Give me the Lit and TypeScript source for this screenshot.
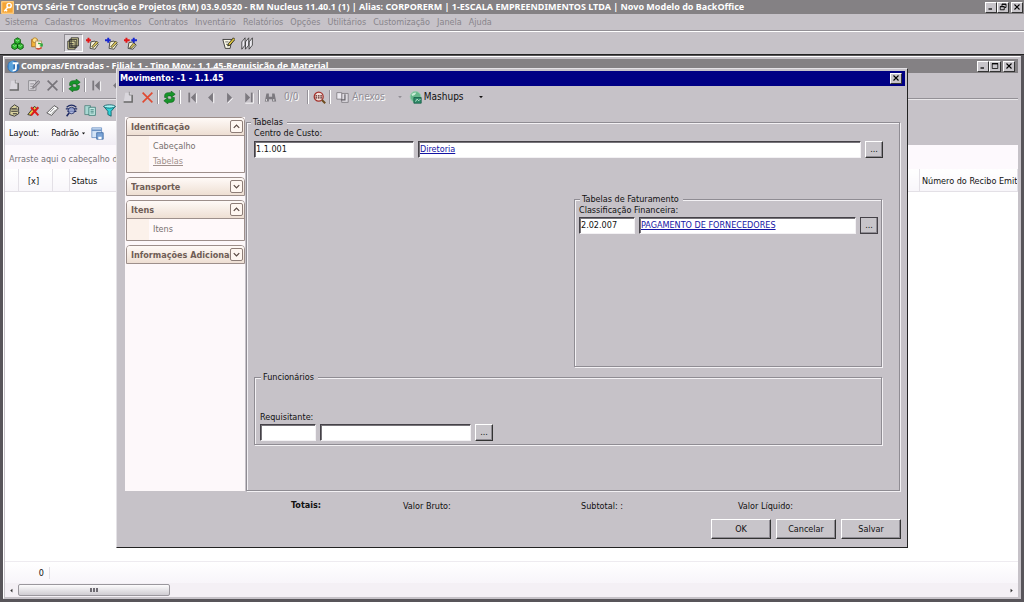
import { LitElement, html, css, svg, nothing, TemplateResult } from "lit";
import { customElement, property, state } from "lit/decorators.js";
import { classMap } from "lit/directives/class-map.js";

const glyphs: Record<string, TemplateResult> = {
  key: svg`<rect width="16" height="16" rx="1" fill="#f6a534"/><rect x="1" y="1" width="14" height="14" fill="none" stroke="#fde3b5"/><circle cx="10" cy="5.5" r="2.6" fill="none" stroke="#fff" stroke-width="1.8"/><path d="M8.5 7.5 4 12.5M5.5 10.5l2 2" stroke="#fff" stroke-width="1.8" fill="none"/>`,
  sphere: svg`<circle cx="8" cy="8" r="7.5" fill="#2f6fb5"/><path d="M2 5a7 7 0 0 1 6-4v14a7 7 0 0 1-6-4z" fill="#5ba3dc"/><path d="M7 4h7M11 4v6q0 3-4 3" stroke="#fff" stroke-width="2.2" fill="none"/>`,
  cubes: svg`<g stroke="#064d06" stroke-width="1" fill="#2fb52f"><path d="m8 1 3.5 2v4L8 9 4.500 7V3z"/><path d="m4.500 7.500 3.500 2v4l-3.500 2-3.500-2v-4zM11.500 7.500l3.500 2v4l-3.500 2-3.500-2v-4z"/></g><path d="m5.500 3.500 2.500 1.500 2.500-1.500M2 10l2.500 1.500L7 10M9 10l2.500 1.500L14 10" stroke="#9bf09b" fill="none"/>`,
  users: svg`<path d="M2 3h7v9H2z" fill="#f2b43a" stroke="#a56a1c"/><circle cx="6" cy="4" r="3" fill="#ffe38a" stroke="#b27a22"/><rect x="7" y="5" width="7" height="9" fill="#fff6da" stroke="#a98e63"/><path d="M10 8a4 4 0 0 1 5 3M15 8v3h-3" stroke="#2da83a" stroke-width="1.600" fill="none"/><path d="M8 14q3 2 6-1" stroke="#d6402c" stroke-width="1.600" fill="none"/>`,
  files: svg`<path d="M5 1h9v10h-9zM3 3h9v10H3zM1 5h9v10H1z" fill="#d8d39a" stroke="#222"/><path d="M3 8h5M3 10h5M3 12h5" stroke="#333"/>`,
  flowR: svg`<path d="m6 6 5-1 4 4-4 6-6-1z" fill="#f6f1d4" stroke="#333"/><path d="m7 12 6-7 2 2-6 6z" fill="#d8c35a" stroke="#222" stroke-width=".8"/><path d="M0 4h6M3 1v6" stroke="#e01818" stroke-width="2.400"/>`,
  flowB: svg`<path d="m6 6 5-1 4 4-4 6-6-1z" fill="#f6f1d4" stroke="#333"/><path d="m7 12 6-7 2 2-6 6z" fill="#d8c35a" stroke="#222" stroke-width=".8"/><path d="M0 4h7M4 1v6" stroke="#1726d0" stroke-width="2.400"/>`,
  flowRB: svg`<path d="m6 7 5-1 4 4-4 5-6-1z" fill="#f6f1d4" stroke="#333"/><path d="m7 13 5-6 2 2-5 5z" fill="#d8c35a" stroke="#222" stroke-width=".8"/><path d="M0 4h7M3 1v6" stroke="#e01818" stroke-width="2.400"/><path d="M9 4h7M12 1v6" stroke="#1726d0" stroke-width="2.400"/>`,
  note: svg`<path d="M1 3h11l-2 11H4z" fill="#fbf8e6" stroke="#222"/><path d="M4 6h4M5 9h3" stroke="#555"/><path d="m7 11 1-3 6-7 2 2-6 7z" fill="#dcc440" stroke="#111"/>`,
  books: svg`<path d="M1 15V6l4-5v9zM5.500 15V6l4-5v9zM10 15V6l4-5v9z" fill="#eceaf0" stroke="#333"/>`,
  doc: svg`<path d="M4 2h6l3 3v9H2" fill="#d9d6dc"/><path d="M12.500 5v8.500H2" stroke="#666" stroke-width="1.800" fill="none"/><path d="M9 1v4h4" fill="none" stroke="#888"/>`,
  edit: svg`<path d="M2 2h9v12H2z" fill="#dad7dc" stroke="#838086"/><path d="M4 6h5M4 9h4M4 12h5" stroke="#838086"/><path d="m7 11 1-3 6-6 2 2-6 6z" fill="#a9a6ac" stroke="#706d73"/>`,
  cut: svg`<path d="m2 2 12 12M14 2 2 14" stroke="#77747a" stroke-width="2"/>`,
  del: svg`<path d="m2 2 12 12M14 2 2 14" stroke="#e04a32" stroke-width="2"/>`,
  refresh: svg`<path d="M2 8V6q0-4 5-4h3V0l5 4-5 4V6H7Q5 6 5 8z" fill="#16962a" stroke="#0a5c16" stroke-width=".7"/><path d="M14 8v2q0 4-5 4H6v2l-5-4 5-4v2h3q2 0 2-2z" fill="#16962a" stroke="#0a5c16" stroke-width=".7"/>`,
  first: svg`<path d="M4 2v12" stroke="#7c797f" stroke-width="2.200"/><path d="M12 2v12L6 8z" fill="#7c797f"/><path d="M13 3v12" stroke="#fff"/>`,
  prev: svg`<path d="M11 2v12L5 8z" fill="#7c797f"/><path d="M12 3v12" stroke="#fff"/>`,
  next: svg`<path d="M5 2v12l6-6z" fill="#7c797f"/><path d="m6 15 6-6" stroke="#fff"/>`,
  last: svg`<path d="M12 2v12" stroke="#7c797f" stroke-width="2.200"/><path d="M4 2v12l6-6z" fill="#7c797f"/><path d="M14 3v12H4" stroke="#fff" fill="none"/>`,
  find: svg`<path d="M3 3h3v4h4V3h3l2 10h-5v-3H6v3H1z" fill="#7c797f"/><path d="M3 10v2M12 10v2" stroke="#eee" stroke-width="1.400"/>`,
  lens: svg`<circle cx="7" cy="7" r="5.500" fill="#f3ded8" stroke="#a3302b" stroke-width="1.600"/><path d="M3 6h8M3 8.500h8" stroke="#55221f" stroke-width="1.500" stroke-dasharray="2 1"/><path d="m11 11 4 4" stroke="#6d4a1e" stroke-width="2.400"/>`,
  attach: svg`<path d="M7 3h8v11H7z" fill="#dedbe1" stroke="#7c797f"/><path d="M1 2h6v8H1z" fill="#eceaf0" stroke="#7c797f"/><path d="M11 4v7H6" stroke="#66636a" stroke-width="1.500" fill="none"/>`,
  globe: svg`<circle cx="8" cy="7" r="6.500" fill="#67b78b" stroke="#8fcfa9"/><path d="M3 4q3-3 6-2-1 3-5 4z" fill="#c8ecd4"/><path d="M6 8h9v7H6z" fill="#2f8a68" stroke="#176047"/><path d="m8 13 2-3 2 2 2-2" stroke="#d9f4e4" fill="none"/>`,
  sheet: svg`<path d="M3 5 8 1l5 3v8l-5 3-6-2z" fill="#d9d29f" stroke="#222"/><path d="M4 6h7M4 9h8M6 12h5" stroke="#333" stroke-width="1.300"/><path d="m10 4 4 7" stroke="#777"/>`,
  wand: svg`<path d="m1 13 8-10 3 2-7 9z" fill="#e4ca48" stroke="#222"/><path d="m5 4 9 10M14 4 5 14" stroke="#dc1c1c" stroke-width="2.400"/>`,
  card: svg`<path d="m1 11 9-9 5 3-8 9z" fill="#fafafa" stroke="#444"/><path d="m5 10 5-5M7 12l5-5" stroke="#777"/>`,
  list: svg`<path d="M2 4q6-5 12 0" fill="none" stroke="#1e2b63" stroke-width="1.500"/><path d="M1 6h14M3 9h11" stroke="#1e2b63" stroke-width="1.700"/><circle cx="8" cy="8" r="4" fill="#a8b7e6" fill-opacity=".7" stroke="#1e2b63"/><path d="m5 11-3 4" stroke="#1e2b63" stroke-width="2"/>`,
  copy: svg`<path d="M1 2h7v11H1z" fill="#a9d8d3" stroke="#53827e"/><path d="M6 4h8v10H6z" fill="#c2e9e4" stroke="#397a74"/><path d="M8 7h4M8 9h4M8 11h4" stroke="#397a74"/>`,
  funnel: svg`<path d="M1 3h14l-5 6v6l-4-2V9z" fill="#2ed3d8" stroke="#0d5961"/><ellipse cx="8" cy="3" rx="7" ry="2" fill="#a8f6f6" stroke="#0d5961"/>`,
  layout: svg`<path d="M1 1h12v12H1z" fill="#d3e3f6" stroke="#6d93c4"/><path d="M1 4h12" stroke="#6d93c4" stroke-width="2"/><path d="M7 7h8v8H7z" fill="#7aa3d6" stroke="#3f6ba5"/><path d="M9 12h4v3H9z" fill="#fff"/>`,
  min: svg`<path d="M3 12h7" stroke="#000" stroke-width="2.500"/>`,
  max: svg`<path d="M2.500 3h11v10h-11z" fill="none" stroke="#000" stroke-width="1.500"/><path d="M2 3.500h12" stroke="#000" stroke-width="2.500"/>`,
  restore: svg`<path d="M6 2h8v7h-3M6 2v4M6 3h8M2.500 7h8v6.500h-8zM2.500 7.500h8" fill="none" stroke="#000" stroke-width="1.700"/>`,
  close: svg`<path d="m3 3 10 10M13 3 3 13" stroke="#000" stroke-width="2.200"/>`,
  up: svg`<path d="m4 10 4-4 4 4" fill="none" stroke="#5b4a44" stroke-width="1.800"/>`,
  down: svg`<path d="m4 6 4 4 4-4" fill="none" stroke="#5b4a44" stroke-width="1.800"/>`,
  caret: svg`<path d="M3 5h10l-5 6z" fill="currentColor"/>`,
  left: svg`<path d="M11 2v12L4 8z" fill="#333"/>`,
  right: svg`<path d="M5 2v12l7-6z" fill="#333"/>`,
};

const icon = (name: string) =>
  html`<svg class="ico ${name}" viewBox="0 0 16 16" aria-hidden="true">${glyphs[name]}</svg>`;

const shared = css`
  * { box-sizing: border-box; }
  button, input { font: inherit; color: inherit; margin: 0; border-radius: 0; }
  button { padding: 0; cursor: default; }
  .ico { display: block; width: 13px; height: 13px; flex: none; }
  .caps { display: flex; margin-left: auto; }
  .cap {
    width: 12px; height: 11px; display: grid; place-items: center;
    background: #c8c5ca; border: 1px solid; border-color: #fff #333 #333 #fff;
  }
  .cap .ico { width: 8px; height: 8px; }
  .cap:last-child:not(:first-child) { margin-left: 2px; }
  .tool { width: 19px; height: 18px; display: grid; place-items: center; border: 0; background: none; flex: none; }
  .bar { display: flex; align-items: center; }
  .rule { width: 2px; height: 14px; margin-right: 1px; border-left: 1px solid #96939a; border-right: 1px solid #fff; flex: none; }
`;

/** Modal record editor: navigation on the left, field groups on the right. */
@customElement("movimento-dialog")
export class MovimentoDialog extends LitElement {
  static styles = [shared, css`
    :host {
      display: flex; flex-direction: column; background: #c6c2c8;
      border: 1px solid; border-color: #e4e2e6 #222 #222 #e4e2e6;
      outline: 1px solid #c6c2c8; outline-offset: -2px; padding: 2px;
    }
    .title {
      display: flex; align-items: center; height: 15px; padding: 0 3px 1px 1px;
      background: #000084; color: #fff; font-weight: bold;
    }
    .bar { height: 22px; }
    .off { color: #918e95; text-shadow: 1px 1px 0 #fff; }
    .text { display: flex; align-items: center; border: 0; background: none; white-space: nowrap; font-size: 10px; }
    .text .caret { width: 6px; height: 6px; margin-left: 12px; }
    .mash { margin-left: 6px; gap: 2px; }
    .anexos { padding-left: 4px; }
    .count { margin: 0 9px 0 4px; font-size: 10px; }
    .body { display: flex; flex: 1; padding: 9px 5px 0 6px; min-height: 0; }
    nav { width: 120px; flex: none; background: #fdf8fa; padding: 0 0 0 1px; }
    .group { border: 1px solid #9d8f8b; border-radius: 4px 4px 0 0; margin-bottom: 4px; background: #fff9fa; }
    .head {
      display: flex; align-items: center; width: 100%; height: 17px; padding: 0 1px 0 4px; border: 0;
      border-radius: 3px 3px 0 0; background: linear-gradient(#fffaf7, #eedfd3);
      color: #6f5d55; font-weight: bold; text-align: left;
    }
    .head span { flex: 1; overflow: hidden; white-space: nowrap; }
    .head .ico { border: 1px solid #8d7d77; border-radius: 2px; background: #fff7f1; }
    .links { border-top: 1px solid #9d8f8b; padding: 3px 0 3px 26px; display: grid; background: linear-gradient(90deg, #fbf1ea 22px, transparent 22px); }
    .links a { line-height: 15px; color: #77706f; text-decoration: none; }
    .links a.here { text-decoration: underline; color: #a0918c; }
    fieldset {
      margin: 0; min-width: 0; border: 1px solid #8f8c93;
      box-shadow: 1px 1px 0 #f3f1f4, inset 1px 1px 0 #f3f1f4; padding: 0 5px;
    }
    legend { padding: 0 4px 0 2px; background: #c6c2c8; line-height: 11px; }
    .main { flex: 1; margin-left: 1px; padding: 0 17px 40px 7px; display: flex; flex-direction: column; }
    .main > legend { margin-left: -3px; }
    .row { display: flex; align-items: center; gap: 4px; }
    .field { display: block; line-height: 11px; }
    input {
      height: 17px; min-width: 0; background: #fff; border: 1px solid; padding: 0 0 1px 1px;
      border-color: #444147 #f3f1f4 #f3f1f4 #444147; box-shadow: inset 1px 1px 0 #77747a; outline: 0;
    }
    input.link { color: #1414a4; text-decoration: underline; }
    .w56 { width: 56px; } .w150 { width: 151px; } .w160 { width: 160px; } .grow { flex: 1; }
    .dots, .cmd {
      background: #c8c5ca; border: 1px solid; border-color: #fff #333 #333 #fff; box-shadow: inset -1px -1px 0 #8f8c93;
    }
    .dots { width: 18px; height: 17px; line-height: 13px; flex: none; }
    .focus { outline: 1px solid #444147; outline-offset: -1px; }
    .fat { align-self: flex-end; width: 308px; height: 173px; margin: 36px 0 0; padding: 0 3px 0 4px; }
    .fat legend, .func legend { margin-left: 1px; }
    .fat .row { margin-top: 1px; }
    .func { padding: 0 5px 3px; margin-top: 5px; }
    .func .field { margin-top: 28px; line-height: 12px; }
    .func .row { margin-top: 1px; }
    .first .row { margin-top: 2px; }
    .first { margin-right: -1px; }
    .totals { display: grid; grid-template-columns: 112px 178px 157px 1fr; padding: 8px 0 0 172px; line-height: 14px; }
    .totals strong { margin-top: -1px; }
    .foot { display: flex; justify-content: flex-end; gap: 5px; padding: 6px 4px 6px 0; }
    .cmd { width: 60px; height: 20px; }
  `];

  @property({ type: Array }) groups = [
    { name: "Identificação", open: true, links: ["Cabeçalho", "Tabelas"] },
    { name: "Transporte", open: false, links: [] },
    { name: "Itens", open: true, links: ["Itens"] },
    { name: "Informações Adicionais", open: false, links: [] },
  ];
  @state() private page = "Tabelas";

  private toggle(i: number) {
    this.groups = this.groups.map((g, n) => (n === i ? { ...g, open: !g.open } : g));
  }

  private go(e: Event, name: string) {
    e.preventDefault();
    this.page = name;
  }

  private tool(name: string, label: string) {
    return html`<button class="tool" aria-label=${label}>${icon(name)}</button>`;
  }

  render() {
    return html`
      <div class="title">Movimento: -1 - 1.1.45
        <span class="caps"><button class="cap" aria-label="Fechar">${icon("close")}</button></span>
      </div>
      <div class="bar">
        ${this.tool("doc", "Novo")}${this.tool("del", "Excluir")}<i class="rule"></i>
        ${this.tool("refresh", "Atualizar")}<i class="rule"></i>
        ${this.tool("first", "Primeiro")}${this.tool("prev", "Anterior")}${this.tool("next", "Próximo")}${this.tool("last", "Último")}
        <i class="rule"></i>${this.tool("find", "Localizar")}
        <span class="off count">0/0</span><i class="rule"></i>
        ${this.tool("lens", "Consultar")}<i class="rule"></i>
        <button class="text off anexos">${icon("attach")}&nbsp;Anexos${icon("caret")}</button>
        <button class="text mash">${icon("globe")}Mashups${icon("caret")}</button>
      </div>
      <div class="body">
        <nav>
          ${this.groups.map((g, i) => html`
            <div class="group">
              <button class="head" @click=${() => this.toggle(i)}><span>${g.name}</span>${icon(g.open ? "up" : "down")}</button>
              ${g.open ? html`<div class="links">${g.links.map((l) => html`
                <a href="#" class=${classMap({ here: l === this.page })} @click=${(e: Event) => this.go(e, l)}>${l}</a>`)}</div>` : nothing}
            </div>`)}
        </nav>
        <fieldset class="main">
          <legend>Tabelas</legend>
          <div class="first">
            <label class="field" for="cc">Centro de Custo:</label>
            <div class="row">
              <input id="cc" class="w160" value="1.1.001" />
              <input class="grow link" aria-label="Descrição do centro de custo" value="Diretoria" />
              <button class="dots" aria-label="Buscar centro de custo">...</button>
            </div>
          </div>
          <fieldset class="fat">
            <legend>Tabelas de Faturamento</legend>
            <label class="field" for="cf">Classificação Financeira:</label>
            <div class="row">
              <input id="cf" class="w56" value="2.02.007" />
              <input class="grow link" aria-label="Descrição da classificação" value="PAGAMENTO DE FORNECEDORES" />
              <button class="dots focus" aria-label="Buscar classificação">...</button>
            </div>
          </fieldset>
          <fieldset class="func">
            <legend>Funcionários</legend>
            <label class="field" for="rq">Requisitante:</label>
            <div class="row">
              <input id="rq" class="w56" />
              <input class="w150" aria-label="Nome do requisitante" />
              <button class="dots" aria-label="Buscar requisitante">...</button>
            </div>
          </fieldset>
        </fieldset>
      </div>
      <div class="totals"><strong>Totais:</strong><span>Valor Bruto:</span><span>Subtotal: :</span><span>Valor Líquido:</span></div>
      <div class="foot"><button class="cmd">OK</button><button class="cmd">Cancelar</button><button class="cmd">Salvar</button></div>
    `;
  }
}

@customElement("app-root")
export class AppRoot extends LitElement {
  static styles = [shared, css`
    :host {
      display: flex; flex-direction: column; height: 100vh; overflow: hidden;
      font: 9px/12px "DejaVu Sans Condensed", "Noto Sans", sans-serif; color: #111; background: #c6c2c8;
    }
    .title {
      display: flex; align-items: center; gap: 1px; height: 14px; padding: 0 1px; flex: none;
      background: #848184; color: #fff; white-space: nowrap;
      font-family: "Noto Sans", sans-serif; font-weight: bold;
    }
    .menu { display: flex; gap: 7px; padding: 2px 5px 2px; height: 17px; border-bottom: 1px solid #939096; }
    .menu button { border: 0; background: none; color: #88858b; }
    .main { height: 23px; padding-left: 8px; border-top: 1px solid #fff; }
    .main .pressed { border: 1px solid; border-color: #8f8c93 #fff #fff #8f8c93; background: #d8d5da; }
    .gap { width: 18px; } .wide { width: 79px; }
    .desk { flex: 1; min-height: 0; display: flex; position: relative; background: #58555a; padding: 1px 3px 3px; border-top: 1px solid #222; }
    .win {
      flex: 1; min-width: 0; display: flex; flex-direction: column; background: #c6c2c8;
      border: 1px solid; border-color: #fff #c6c2c8 #c6c2c8 #fff; padding: 2px 2px 1px 1px;
    }
    .win .title { height: 14px; padding: 0 3px 0 2px; }
    .r1 { height: 26px; padding-bottom: 1px; border-bottom: 1px solid #939096; flex: none; }
    .r2 { height: 22px; border-top: 1px solid #e9e7ea; flex: none; }
    .view { display: flex; height: 24px; flex: none; }
    .strip { width: 420px; display: flex; align-items: center; padding-left: 4px; background: linear-gradient(#fff, #f1edf4); }
    .strip button { display: flex; align-items: center; margin-left: 12px; border: 0; background: none; }
    .strip .caret { width: 5px; height: 5px; margin: 0 5px 0 2px; }
    .drop { height: 24px; flex: none; padding: 8px 4px; background: #fdf9fd; color: #77747a; white-space: nowrap; }
    .grid { flex: 1; background: #fff; overflow: hidden; }
    table { width: 100%; border-collapse: collapse; table-layout: fixed; }
    th {
      height: 22px; padding: 2px 0 0 2px; font-weight: normal; text-align: left; white-space: nowrap; overflow: hidden;
      background: linear-gradient(#fff, #f8f6fa); border: 1px solid #e3e0e6; border-width: 0 1px 1px 0;
    }
    .c { text-align: center; padding: 2px 3px 0 0; }
    .sum { height: 22px; flex: none; border-top: 1px solid #eeebf0; background: linear-gradient(#fff, #f8f5fa); padding: 5px 0; }
    .sum span { display: block; width: 45px; padding-right: 5px; text-align: right; border-right: 1px solid #e3e0e6; }
    .scroll { display: flex; align-items: center; height: 14px; flex: none; background: #f4f0f5; padding: 0 4px; }
    .scroll .ico { width: 5px; height: 5px; }
    .thumb {
      width: 152px; height: 12px; margin: 0 auto 0 4px; border: 1px solid #9a979d; border-radius: 2px;
      background: linear-gradient(#fdfcfd, #cfccd2); display: flex; gap: 1px; justify-content: center; align-items: center;
    }
    .thumb i { width: 2px; height: 4px; background: #6f6c73; }
    movimento-dialog { position: absolute; left: 116px; right: 116px; top: 13px; height: 480px; }
  `];

  private menus = ["Sistema", "Cadastros", "Movimentos", "Contratos", "Inventário", "Relatórios", "Opções", "Utilitários", "Customização", "Janela", "Ajuda"];

  private tool(name: string, label: string, pressed = false) {
    return html`<button class=${classMap({ tool: true, pressed })} aria-label=${label}>${icon(name)}</button>`;
  }

  private caps(middle: string) {
    return html`<span class="caps">
      <button class="cap" aria-label="Minimizar">${icon("min")}</button><button class="cap" aria-label="Restaurar">${icon(middle)}</button><button class="cap" aria-label="Fechar">${icon("close")}</button>
    </span>`;
  }

  render() {
    return html`
      <header class="title">${icon("key")}TOTVS Série T Construção e Projetos (RM) 03.9.0520 - RM Nucleus 11.40.1 (1) | Alias: CORPORERM | 1-ESCALA EMPREENDIMENTOS LTDA | Novo Modelo do BackOffice${this.caps("restore")}</header>
      <nav class="menu">${this.menus.map((m) => html`<button>${m}</button>`)}</nav>
      <div class="bar main">
        ${this.tool("cubes", "Módulos")}${this.tool("users", "Usuários")}<i class="gap"></i>
        ${this.tool("files", "Movimentos", true)}${this.tool("flowR", "Saída")}${this.tool("flowB", "Entrada")}${this.tool("flowRB", "Transferência")}
        <i class="wide"></i>${this.tool("note", "Notas")}${this.tool("books", "Cadastros")}
      </div>
      <main class="desk">
        <section class="win">
          <div class="title">${icon("sphere")}Compras/Entradas - Filial: 1 - Tipo Mov.: 1.1.45-Requisição de Material${this.caps("max")}</div>
          <div class="bar r1">
            ${this.tool("doc", "Novo")}${this.tool("edit", "Editar")}${this.tool("cut", "Excluir")}<i class="rule"></i>
            ${this.tool("refresh", "Atualizar")}<i class="rule"></i>${this.tool("first", "Primeiro")}${this.tool("prev", "Anterior")}
          </div>
          <div class="bar r2">
            ${this.tool("sheet", "Planilha")}${this.tool("wand", "Cancelar")}${this.tool("card", "Ficha")}${this.tool("list", "Consulta")}${this.tool("copy", "Copiar")}${this.tool("funnel", "Filtro")}
          </div>
          <div class="view"><div class="strip">Layout:<button>Padrão${icon("caret")}</button>${icon("layout")}</div></div>
          <div class="drop">Arraste aqui o cabeçalho de</div>
          <div class="grid">
            <table>
              <colgroup><col style="width:13px" /><col style="width:34px" /><col style="width:17px" /><col style="width:60px" /><col /><col style="width:98px" /></colgroup>
              <thead><tr><th></th><th class="c">[x]</th><th></th><th>Status</th><th></th><th>Número do Recibo Emitido</th></tr></thead>
              <tbody></tbody>
            </table>
          </div>
          <div class="sum"><span>0</span></div>
          <div class="scroll">${icon("left")}<div class="thumb"><i></i><i></i><i></i></div>${icon("right")}</div>
        </section>
        <movimento-dialog></movimento-dialog>
      </main>
    `;
  }
}
